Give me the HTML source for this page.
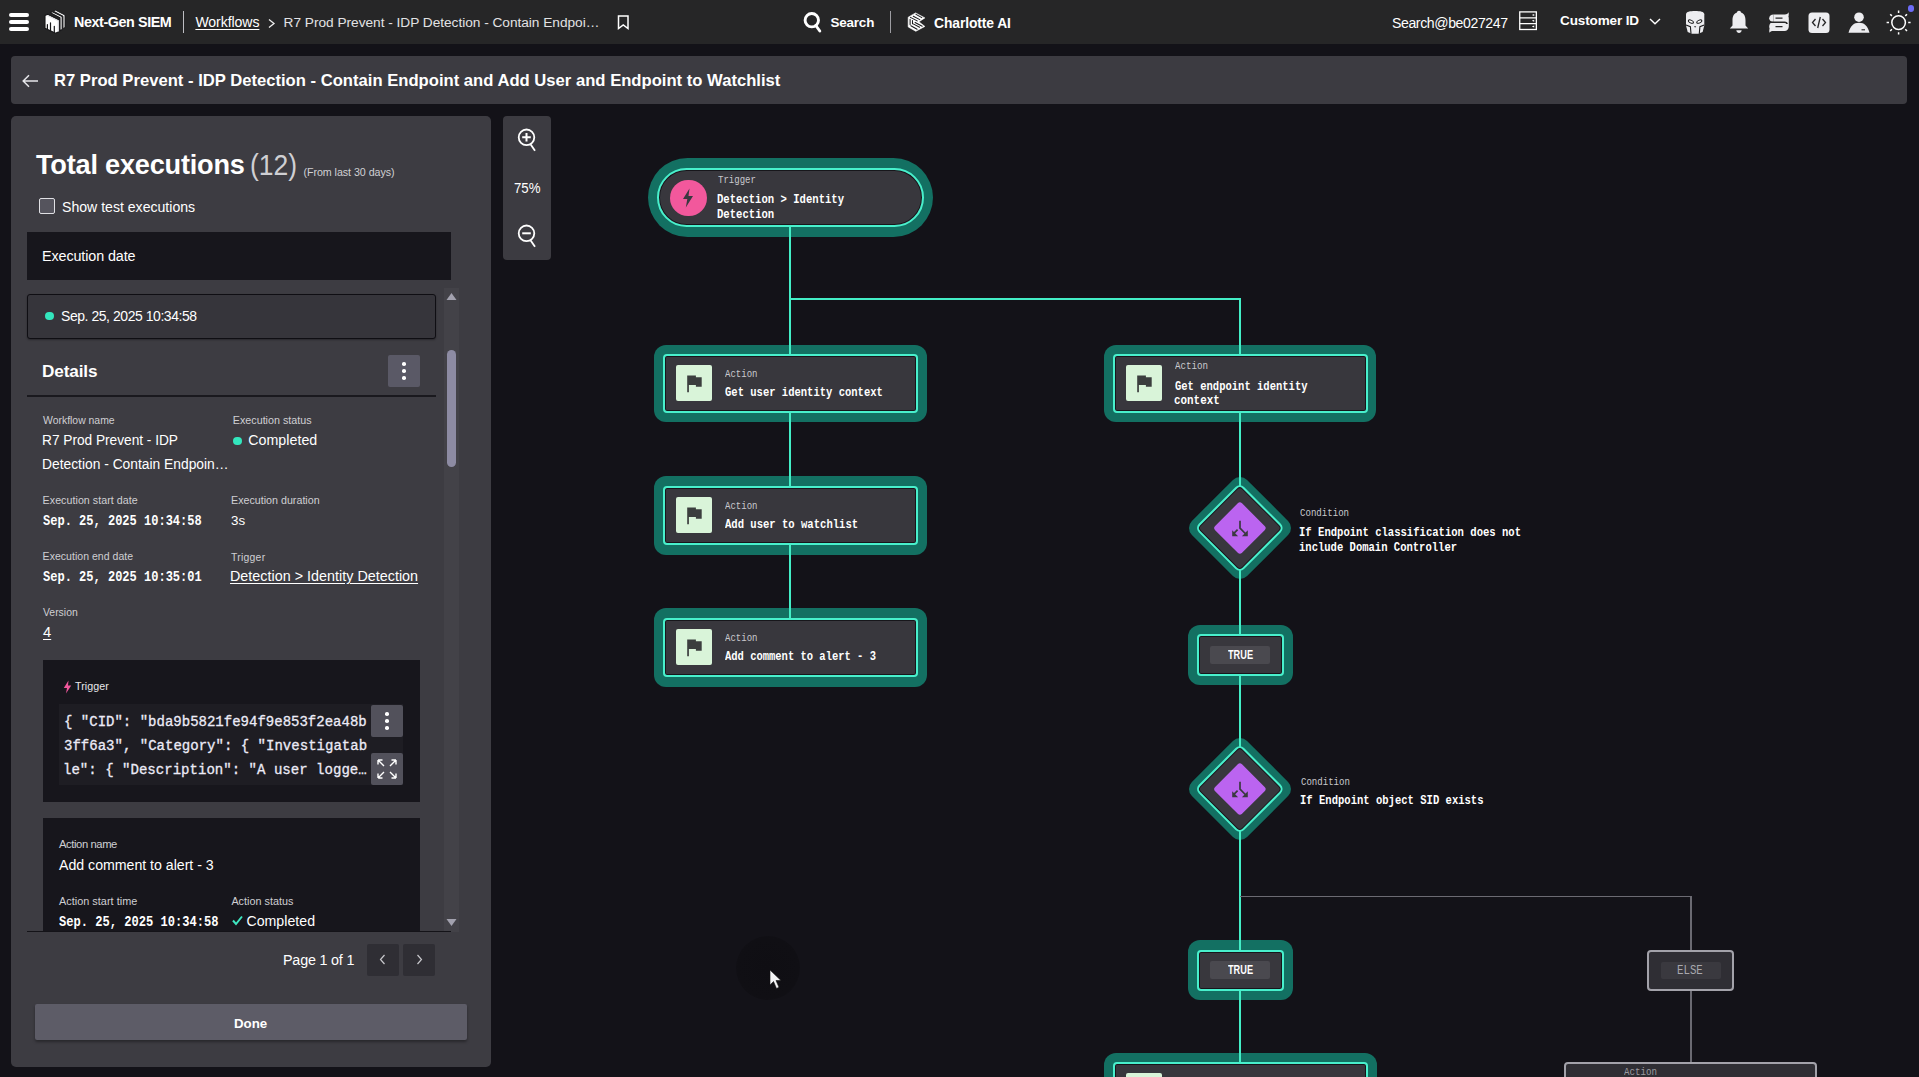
<!DOCTYPE html>
<html><head><meta charset="utf-8">
<style>
*{box-sizing:border-box;margin:0;padding:0}
html,body{width:1919px;height:1077px;overflow:hidden;background:#131218;font-family:"Liberation Sans",sans-serif;color:#fff}
.a{position:absolute}
.t{position:absolute;white-space:nowrap;line-height:1;z-index:5}
svg{position:absolute;overflow:visible}
.glow{position:absolute;background:#137062;z-index:1}
.inner{position:absolute;background:#38373d;border:2px solid #48f0cc;box-shadow:inset 0 0 0 1px #17161b;z-index:3}
.ln{position:absolute;background:#43eec6;z-index:2}
.gln{position:absolute;background:#6b6a72;z-index:2}
.ico{position:absolute;width:36px;height:36px;background:#d9f4d9;border-radius:2px;z-index:4}
.btn{position:absolute;width:32px;height:32px;background:#55535f;border-radius:2px;z-index:4}
</style></head><body>
<!-- NAV -->
<div class="a" style="left:0;top:0;width:1919px;height:44px;background:#262627"></div>
<div class="a" style="left:8.9px;top:12.8px;width:20.1px;height:4.2px;background:#fff;border-radius:2.1px"></div>
<div class="a" style="left:8.9px;top:19.8px;width:20.1px;height:4.2px;background:#fff;border-radius:2.1px"></div>
<div class="a" style="left:8.9px;top:26.8px;width:20.1px;height:4.2px;background:#fff;border-radius:2.1px"></div>
<!-- logo -->
<svg style="left:40px;top:6px" width="30" height="30" viewBox="0 0 30 30">
  <path d="M13.5 5.2 L15.6 4.2 L25 9 L25 21.5 L23 22.5 L23 10.2 Z" fill="#fff" stroke="#161618" stroke-width="0.9" stroke-linejoin="round"/>
  <path d="M10.3 6.8 L12.5 5.7 L22.2 10.6 L22.2 23.6 L20 24.7 L20 11.8 Z" fill="#fff" stroke="#161618" stroke-width="1.1" stroke-linejoin="round"/>
  <path d="M5 9.6 L7.6 8.3 L19.2 14 L19.2 25.6 L15.6 27.3 L5 22.2 Z" fill="#fff" stroke="#161618" stroke-width="1.1" stroke-linejoin="round"/>
  <path d="M7.3 9.5 L18.2 14.8 L18.2 25.5" fill="none" stroke="#e2e2e6" stroke-width="1.2"/>
  <path d="M7.4 18.6 V23 M10.5 16.8 V25 M14.3 20.3 V26.5" stroke="#161618" stroke-width="1.2" stroke-linecap="round"/>
</svg>
<div class="a" style="left:183px;top:11px;width:1.2px;height:22px;background:#bdbdc2"></div>
<svg style="left:268px;top:19px" width="8" height="9" viewBox="0 0 8 9"><path d="M1 0.5 L6 4.5 L1 8.5" stroke="#eee" stroke-width="1.3" fill="none"/></svg>
<svg style="left:617px;top:14.5px" width="13" height="15" viewBox="0 0 13 15"><path d="M1.5 1 H11 V13.5 L6.25 10 L1.5 13.5 Z" stroke="#fff" stroke-width="1.5" fill="none" stroke-linejoin="miter"/></svg>
<!-- search -->
<svg style="left:803px;top:12px" width="20" height="21" viewBox="0 0 20 21"><circle cx="8.8" cy="8.2" r="6.7" stroke="#fff" stroke-width="2.9" fill="none"/><path d="M12.8 13.5 L16.8 19" stroke="#fff" stroke-width="2.9" stroke-linecap="round"/></svg>
<div class="a" style="left:890px;top:11px;width:1.2px;height:22px;background:#9d9da2"></div>
<!-- charlotte -->
<svg style="left:903px;top:8px" width="26" height="28" viewBox="0 0 26 28">
  <path d="M5.2 9.2 L12.6 4.9 L21.9 9.9 L15.9 13.8 L21.9 18.4 L12.8 23.3 L5.2 18.9 Z" fill="#fff" stroke="#fff" stroke-width="0.6" stroke-linejoin="round"/>
  <path d="M7.4 9.4 L14.2 12.9 M10.3 8.2 L16.8 11.6 M13 6.4 L18.8 9.6 M7.9 17.7 L14.1 21.2 M9.7 15.6 L16.6 19.3 M12.1 14.5 L19.2 18.3 M7.1 11.3 V16.6 M9.5 12.6 V15.7" stroke="#1a1a1c" stroke-width="1.05" stroke-linecap="round"/>
</svg>
<!-- server icon -->
<svg style="left:1519px;top:11px" width="19" height="19" viewBox="0 0 19 19"><rect x="0.75" y="0.9" width="16.6" height="17.6" stroke="#fff" stroke-width="1.3" fill="none"/><path d="M0.7 6.8 H17.4 M0.7 12.6 H17.4" stroke="#fff" stroke-width="1.3"/><path d="M12.8 3.9 L15.2 2.9 V4.9 Z M12.8 9.7 L15.2 8.7 V10.7 Z M12.8 15.5 L15.2 14.5 V16.5 Z" fill="#fff"/></svg>
<svg style="left:1649px;top:17.5px" width="12" height="7" viewBox="0 0 12 7"><path d="M1 1 L6 5.8 L11 1" stroke="#fff" stroke-width="1.4" fill="none"/></svg>
<!-- falcon mask -->
<svg style="left:1682px;top:8px" width="26" height="28" viewBox="0 0 26 28">
  <path d="M4 6.2 C4 3.6 8 2.9 13.1 2.9 C18.2 2.9 22.3 3.6 22.3 6.2 L22.3 17.5 L20.6 24 L16.2 25.7 L10 25.7 L5.7 24 L4 17.5 Z" fill="#ededf0"/>
  <ellipse cx="8.9" cy="13.6" rx="2.7" ry="1.35" transform="rotate(24 8.9 13.6)" fill="#fff" stroke="#1a1a1c" stroke-width="1"/>
  <ellipse cx="17.3" cy="13.6" rx="2.7" ry="1.35" transform="rotate(-24 17.3 13.6)" fill="#fff" stroke="#1a1a1c" stroke-width="1"/>
  <path d="M12 18.2 H14.2 L13.1 19.7 Z" fill="#1a1a1c"/>
  <path d="M4 17.1 L8.4 18.7 L9 25.6 M22.3 17.1 L17.9 18.7 L17.3 25.6" stroke="#1a1a1c" stroke-width="1.1" fill="none"/>
</svg>
<!-- bell -->
<svg style="left:1729px;top:10px" width="20" height="24" viewBox="0 0 20 24">
  <path d="M10 0.8 C11.3 0.8 12 1.8 12 2.6 C15.5 3.8 16.5 7 16.5 10.5 L16.5 15.5 L19.2 18.6 L0.8 18.6 L3.5 15.5 L3.5 10.5 C3.5 7 4.5 3.8 8 2.6 C8 1.8 8.7 0.8 10 0.8 Z" fill="#ededf0"/>
  <path d="M7.3 20.3 C7.6 22.2 8.7 23 10 23 C11.3 23 12.4 22.2 12.7 20.3 Z" fill="#ededf0"/>
</svg>
<!-- chat S -->
<svg style="left:1769px;top:11.5px" width="20" height="21" viewBox="0 0 20 21">
  <path d="M4.5 2.5 H16 C17.5 2.5 18.8 1.8 19.6 0.3 C19.8 2 19.8 3 19.4 4.5 C19.8 5.2 19.8 6.2 19.8 6.5 L19.8 14.5 C19.8 17 18 19 15.5 19 H4 C2.5 19 1.2 19.7 0.4 20.7 C0.2 19 0.2 18 0.6 16.5 C0.3 16 0.2 15.2 0.2 14.5 C0.2 12 2 10 4.5 10 Z" fill="#ededf0"/>
  <path d="M4.5 2.5 C2 2.5 0.2 4 0.2 6.3 C0.2 8.5 2 10 4.5 10 Z" fill="#ededf0"/>
  <path d="M0 10.2 H15.5 C17.5 10.2 18 11 18 12" stroke="#262627" stroke-width="1.6" fill="none"/>
  <path d="M6.5 6.2 H13.5 M6.5 14.6 H13.5" stroke="#262627" stroke-width="1.3"/>
</svg>
<!-- code box -->
<svg style="left:1808px;top:11.5px" width="22" height="21" viewBox="0 0 22 21">
  <rect x="0.5" y="0.5" width="21" height="20.5" rx="3.5" fill="#ededf0"/>
  <path d="M7.5 7 L4.5 10.5 L7.5 14 M14.5 7 L17.5 10.5 L14.5 14 M12.3 5 L9.7 16" stroke="#262627" stroke-width="1.3" fill="none"/>
</svg>
<!-- person -->
<svg style="left:1848px;top:11.5px" width="22" height="21" viewBox="0 0 22 21">
  <circle cx="11" cy="5.2" r="4.8" fill="#ededf0"/>
  <path d="M11 10.8 C5.5 10.8 2.5 14 0.5 20.8 L21.5 20.8 C19.5 14 16.5 10.8 11 10.8 Z" fill="#ededf0"/>
  <path d="M13.5 17.8 H17" stroke="#262627" stroke-width="1.1"/>
</svg>
<!-- sun -->
<svg style="left:1886px;top:9.5px" width="26" height="26" viewBox="0 0 26 26">
  <circle cx="12.6" cy="12.6" r="6.8" stroke="#fff" stroke-width="1.5" fill="none"/>
  <path d="M12.6 0.6 V3 M12.6 22.2 V24.6 M0.6 12.6 H3 M22.2 12.6 H24.6 M4.2 4.2 L5.9 5.9 M19.3 19.3 L21 21 M4.2 21 L5.9 19.3 M19.3 5.9 L21 4.2" stroke="#fff" stroke-width="1.5"/>
</svg>
<div class="a" style="left:1907.5px;top:5px;width:6.5px;height:6.5px;border-radius:50%;background:#6d6cf7"></div>

<!-- TITLE BAR -->
<div class="a" style="left:11px;top:56px;width:1896px;height:48px;background:#3c3b41;border-radius:4px"></div>
<svg style="left:22px;top:73.5px" width="17" height="14" viewBox="0 0 17 14"><path d="M16 7 H1.5 M7 1.2 L1.2 7 L7 12.8" stroke="#e6e6ea" stroke-width="1.5" fill="none"/></svg>

<!-- LEFT PANEL -->
<div class="a" style="left:11px;top:116px;width:480px;height:951px;background:#3d3c42;border-radius:5px"></div>
<div class="a" style="left:39px;top:198px;width:16px;height:16px;background:#55545d;border:1.5px solid #e0e0e4;border-radius:2px"></div>
<div class="a" style="left:27px;top:232px;width:424px;height:48px;background:#17161c"></div>
<!-- scroll track -->
<div class="a" style="left:444px;top:288px;width:15px;height:644px;background:#434248"></div>
<svg style="left:446px;top:292px" width="11" height="9" viewBox="0 0 11 9"><path d="M5.5 1 L10.5 8 H0.5 Z" fill="#a2a1ae"/></svg>
<svg style="left:446px;top:918px" width="11" height="9" viewBox="0 0 11 9"><path d="M0.5 1 H10.5 L5.5 8 Z" fill="#a2a1ae"/></svg>
<div class="a" style="left:447px;top:350px;width:9px;height:117px;background:#8d8ba3;border-radius:4.5px"></div>
<!-- date row -->
<div class="a" style="left:27px;top:293.5px;width:409px;height:45px;background:#36353b;border:1px solid #0f0e13;border-radius:3px;box-shadow:0 1px 2px rgba(0,0,0,.35)"></div>
<div class="a" style="left:45.3px;top:311.7px;width:8.6px;height:8.6px;border-radius:50%;background:#33e6bd"></div>
<!-- details -->
<div class="btn" style="left:388px;top:355px;background:#5a5966"></div>
<div class="a" style="left:402.2px;top:362.3px;width:3.6px;height:3.6px;border-radius:50%;background:#fff;z-index:5"></div>
<div class="a" style="left:402.2px;top:369.3px;width:3.6px;height:3.6px;border-radius:50%;background:#fff;z-index:5"></div>
<div class="a" style="left:402.2px;top:376.3px;width:3.6px;height:3.6px;border-radius:50%;background:#fff;z-index:5"></div>
<div class="a" style="left:27px;top:394.5px;width:409px;height:2px;background:#1a191e"></div>
<div class="a" style="left:233px;top:436.7px;width:8.8px;height:8.8px;border-radius:50%;background:#33e6bd"></div>
<!-- trigger block -->
<div class="a" style="left:43px;top:660px;width:377px;height:141.5px;background:#17161c"></div>
<svg style="left:62.5px;top:679.5px" width="9" height="14" viewBox="0 0 9 14"><path d="M5.5 0.5 L0.8 8 H4 L3 13.5 L8.2 5.5 H5 Z" fill="#f0579b"/></svg>
<div class="a" style="left:59px;top:703.7px;width:344px;height:81.3px;background:#1e1d23"></div>
<div class="btn" style="left:371px;top:705px;background:#52515b"></div>
<div class="a" style="left:385.2px;top:712.3px;width:3.6px;height:3.6px;border-radius:50%;background:#fff;z-index:5"></div>
<div class="a" style="left:385.2px;top:719.3px;width:3.6px;height:3.6px;border-radius:50%;background:#fff;z-index:5"></div>
<div class="a" style="left:385.2px;top:726.3px;width:3.6px;height:3.6px;border-radius:50%;background:#fff;z-index:5"></div>
<div class="btn" style="left:371px;top:753px;background:#52515b"></div>
<svg style="left:376px;top:758px;z-index:5" width="22" height="22" viewBox="0 0 22 22"><path d="M2 2 L8 8 M2 2 H6.5 M2 2 V6.5 M20 2 L14 8 M20 2 H15.5 M20 2 V6.5 M2 20 L8 14 M2 20 H6.5 M2 20 V15.5 M20 20 L14 14 M20 20 H15.5 M20 20 V15.5" stroke="#fff" stroke-width="1.4" fill="none"/></svg>
<!-- action block -->
<div class="a" style="left:43px;top:818px;width:377px;height:113px;background:#17161c"></div>
<svg style="left:231.5px;top:915px;z-index:5" width="11" height="11" viewBox="0 0 11 11"><path d="M1 5.5 L4 9 L10 1.5" stroke="#3ee6c0" stroke-width="2" fill="none"/></svg>
<div class="a" style="left:27px;top:930.5px;width:424px;height:1.5px;background:#141318;z-index:6"></div>
<!-- pagination -->
<div class="a" style="left:367px;top:944px;width:32px;height:31.5px;background:#2f2e34;border-radius:2px"></div>
<div class="a" style="left:403px;top:944px;width:32px;height:31.5px;background:#2f2e34;border-radius:2px"></div>
<svg style="left:379px;top:954px" width="7" height="11" viewBox="0 0 7 11"><path d="M5.5 1 L1.5 5.5 L5.5 10" stroke="#c8c8cc" stroke-width="1.2" fill="none"/></svg>
<svg style="left:416px;top:954px" width="7" height="11" viewBox="0 0 7 11"><path d="M1.5 1 L5.5 5.5 L1.5 10" stroke="#c8c8cc" stroke-width="1.2" fill="none"/></svg>
<div class="a" style="left:35px;top:1004px;width:432px;height:36px;background:#5d5c67;border-radius:2px;box-shadow:0 2px 3px rgba(0,0,0,.35)"></div>

<!-- ZOOM -->
<div class="a" style="left:503px;top:116px;width:48px;height:144px;background:#3c3b41;border-radius:4px"></div>
<svg style="left:517px;top:128px" width="20" height="24" viewBox="0 0 20 24"><circle cx="9.5" cy="9.3" r="7.8" stroke="#fff" stroke-width="1.8" fill="none"/><path d="M9.5 5 V13.6 M5.2 9.3 H13.8" stroke="#fff" stroke-width="2"/><path d="M13.5 16.2 L18 22.8" stroke="#fff" stroke-width="1.8"/></svg>
<svg style="left:517px;top:224px" width="20" height="24" viewBox="0 0 20 24"><circle cx="9.5" cy="9.3" r="7.8" stroke="#fff" stroke-width="1.8" fill="none"/><path d="M5.2 9.3 H13.8" stroke="#fff" stroke-width="2"/><path d="M13.5 16.2 L18 22.8" stroke="#fff" stroke-width="1.8"/></svg>

<!-- CANVAS -->
<!-- lines -->
<div class="ln" style="left:789px;top:220px;width:2px;height:400px"></div>
<div class="ln" style="left:789px;top:298px;width:452px;height:2px"></div>
<div class="ln" style="left:1239px;top:298px;width:2px;height:779px"></div>
<div class="gln" style="left:1240px;top:895.5px;width:451.5px;height:1.5px"></div>
<div class="gln" style="left:1690px;top:895.5px;width:1.5px;height:181px"></div>

<!-- trigger pill -->
<div class="glow" style="left:648px;top:158px;width:285px;height:79px;border-radius:40px"></div>
<div class="inner" style="left:656.5px;top:167.5px;width:267.5px;height:59.5px;border-radius:30px"></div>
<div class="a" style="left:670px;top:179.5px;width:36.5px;height:36.5px;border-radius:50%;background:#f2589c;z-index:4"></div>
<svg style="left:681px;top:187.5px;z-index:5" width="14" height="20" viewBox="0 0 14 20"><path d="M8.5 0.5 L2 11 H6.3 L4.8 19.5 L12 8 H7.5 Z" fill="#3a3940"/></svg>

<!-- action nodes left -->
<div class="glow" style="left:654px;top:344.5px;width:272.5px;height:77.5px;border-radius:12px"></div>
<div class="inner" style="left:663px;top:353.7px;width:254.5px;height:59px;border-radius:4px"></div>
<div class="ico" style="left:676px;top:365.3px"></div>
<div class="glow" style="left:654px;top:476px;width:272.5px;height:78.5px;border-radius:12px"></div>
<div class="inner" style="left:663px;top:486px;width:254.5px;height:59px;border-radius:4px"></div>
<div class="ico" style="left:676px;top:497px"></div>
<div class="glow" style="left:654px;top:608.2px;width:272.5px;height:78.5px;border-radius:12px"></div>
<div class="inner" style="left:663px;top:618.2px;width:254.5px;height:59px;border-radius:4px"></div>
<div class="ico" style="left:676px;top:629px"></div>
<!-- right action node -->
<div class="glow" style="left:1104.3px;top:344.8px;width:272.2px;height:77.2px;border-radius:12px"></div>
<div class="inner" style="left:1113.3px;top:354px;width:254.3px;height:58.5px;border-radius:4px"></div>
<div class="ico" style="left:1126px;top:365.3px"></div>
<!-- flags -->
<svg style="left:676px;top:365.3px;z-index:5" width="36" height="36" viewBox="0 0 36 36"><path d="M11.2 10.6 H19.9 V12.2 H25.7 V21.8 H19.9 V19.9 H12.9 V27.3 H11.2 Z" fill="#3b3e3e"/></svg>
<svg style="left:676px;top:497px;z-index:5" width="36" height="36" viewBox="0 0 36 36"><path d="M11.2 10.6 H19.9 V12.2 H25.7 V21.8 H19.9 V19.9 H12.9 V27.3 H11.2 Z" fill="#3b3e3e"/></svg>
<svg style="left:676px;top:629px;z-index:5" width="36" height="36" viewBox="0 0 36 36"><path d="M11.2 10.6 H19.9 V12.2 H25.7 V21.8 H19.9 V19.9 H12.9 V27.3 H11.2 Z" fill="#3b3e3e"/></svg>
<svg style="left:1126px;top:365.3px;z-index:5" width="36" height="36" viewBox="0 0 36 36"><path d="M11.2 10.6 H19.9 V12.2 H25.7 V21.8 H19.9 V19.9 H12.9 V27.3 H11.2 Z" fill="#3b3e3e"/></svg>

<!-- diamonds -->
<div class="glow" style="left:1201px;top:488.5px;width:78px;height:78px;border-radius:10px;transform:rotate(45deg)"></div>
<div class="inner" style="left:1208.2px;top:495.7px;width:63.6px;height:63.6px;border-radius:6px;transform:rotate(45deg)"></div>
<div class="a" style="left:1221.1px;top:508.6px;width:37.8px;height:37.8px;border-radius:3px;transform:rotate(45deg);background:#bb64f0;z-index:4"></div>
<svg style="left:1228px;top:515.5px;z-index:5" width="24" height="24" viewBox="0 0 24 24"><path d="M12 4.8 V12.2 L17.8 18 M9.6 13.6 L5.6 17.6" stroke="#3a3940" stroke-width="1.7" fill="none"/><path d="M19.8 20.2 V14.3 L13.9 20.2 Z M4.2 20.2 V14.3 L10.1 20.2 Z" fill="#3a3940"/></svg>

<div class="glow" style="left:1201px;top:749.5px;width:78px;height:78px;border-radius:10px;transform:rotate(45deg)"></div>
<div class="inner" style="left:1208.2px;top:756.7px;width:63.6px;height:63.6px;border-radius:6px;transform:rotate(45deg)"></div>
<div class="a" style="left:1221.1px;top:769.6px;width:37.8px;height:37.8px;border-radius:3px;transform:rotate(45deg);background:#bb64f0;z-index:4"></div>
<svg style="left:1228px;top:776.5px;z-index:5" width="24" height="24" viewBox="0 0 24 24"><path d="M12 4.8 V12.2 L17.8 18 M9.6 13.6 L5.6 17.6" stroke="#3a3940" stroke-width="1.7" fill="none"/><path d="M19.8 20.2 V14.3 L13.9 20.2 Z M4.2 20.2 V14.3 L10.1 20.2 Z" fill="#3a3940"/></svg>

<!-- TRUE boxes -->
<div class="glow" style="left:1188px;top:625px;width:105px;height:60px;border-radius:12px"></div>
<div class="inner" style="left:1196.7px;top:634px;width:87.5px;height:42.2px;border-radius:4px"></div>
<div class="a" style="left:1210px;top:646px;width:60.3px;height:18px;background:#4a494f;border-radius:2px;z-index:4"></div>
<div class="glow" style="left:1188px;top:940px;width:105px;height:60px;border-radius:12px"></div>
<div class="inner" style="left:1196.7px;top:949.5px;width:87.5px;height:41px;border-radius:4px"></div>
<div class="a" style="left:1210px;top:961px;width:60.3px;height:18px;background:#4a494f;border-radius:2px;z-index:4"></div>
<!-- ELSE -->
<div class="a" style="left:1647px;top:949.5px;width:87px;height:41px;border:2px solid #a3a2aa;border-radius:4px;background:#2f2e34;z-index:3"></div>
<div class="a" style="left:1660.7px;top:961.5px;width:60px;height:17px;background:#3a393f;border-radius:2px;z-index:4"></div>
<!-- bottom nodes -->
<div class="glow" style="left:1104px;top:1052.8px;width:272.5px;height:40px;border-radius:12px"></div>
<div class="inner" style="left:1113px;top:1062px;width:254.6px;height:40px;border-radius:4px"></div>
<div class="ico" style="left:1126px;top:1072.5px"></div>
<div class="a" style="left:1563.5px;top:1062px;width:253.2px;height:40px;border:2px solid #a3a2aa;border-radius:4px;background:#2f2e34;z-index:3"></div>

<!-- cursor -->
<div class="a" style="left:735.5px;top:936px;width:64px;height:64px;border-radius:50%;background:radial-gradient(circle,#0f0e13 0,#100f14 65%,#121117 100%);z-index:1"></div>
<svg style="left:769px;top:969px;z-index:6" width="14" height="22" viewBox="0 0 14 22"><path d="M1 1 L1 16 L4.5 12.5 L7.5 19.5 L10 18.3 L7 11.5 L12 11.5 Z" fill="#f4f4f6" stroke="#111" stroke-width="0.6"/></svg>

<div class="t" style="left:74.00px;top:15.30px;font-size:14.35px;color:#fff;font-weight:bold;letter-spacing:-0.417px;">Next-Gen SIEM</div>
<div class="t" style="left:195.40px;top:15.40px;font-size:14.09px;color:#fff;letter-spacing:-0.075px;text-decoration:underline;text-underline-offset:2px;">Workflows</div>
<div class="t" style="left:283.60px;top:15.86px;font-size:13.69px;color:#e2e2e4;letter-spacing:-0.025px;">R7 Prod Prevent - IDP Detection - Contain Endpoi…</div>
<div class="t" style="left:830.40px;top:15.71px;font-size:13.43px;color:#fff;font-weight:bold;letter-spacing:-0.160px;">Search</div>
<div class="t" style="left:934.00px;top:16.83px;font-size:13.88px;color:#fff;font-weight:bold;letter-spacing:-0.109px;">Charlotte AI</div>
<div class="t" style="left:1392.00px;top:15.83px;font-size:14.09px;color:#fff;letter-spacing:-0.393px;">Search@be027247</div>
<div class="t" style="left:1560.00px;top:13.92px;font-size:13.51px;color:#fff;font-weight:bold;letter-spacing:-0.120px;">Customer ID</div>
<div class="t" style="left:54.00px;top:73.35px;font-size:16.64px;color:#fff;font-weight:bold;letter-spacing:0.001px;">R7 Prod Prevent - IDP Detection - Contain Endpoint and Add User and Endpoint to Watchlist</div>
<div class="t" style="left:36.00px;top:151.44px;font-size:27.13px;color:#fff;font-weight:bold;letter-spacing:-0.213px;">Total executions</div>
<div class="t" style="left:250.00px;top:150.42px;font-size:30.10px;color:#cfcfd3;transform:scaleX(0.8800);transform-origin:0 0;">(12)</div>
<div class="t" style="left:303.40px;top:166.61px;font-size:10.70px;color:#d0d0d4;letter-spacing:-0.044px;">(From last 30 days)</div>
<div class="t" style="left:62.00px;top:199.64px;font-size:14.11px;color:#fff;letter-spacing:-0.011px;">Show test executions</div>
<div class="t" style="left:42.00px;top:249.30px;font-size:14.35px;color:#fff;letter-spacing:-0.108px;">Execution date</div>
<div class="t" style="left:61.00px;top:309.89px;font-size:13.96px;color:#fff;letter-spacing:-0.429px;">Sep. 25, 2025 10:34:58</div>
<div class="t" style="left:42.00px;top:363.16px;font-size:17.17px;color:#fff;font-weight:bold;letter-spacing:-0.117px;">Details</div>
<div class="t" style="left:43.00px;top:416.43px;font-size:10.43px;color:#cfcfd3;">Workflow name</div>
<div class="t" style="left:42.00px;top:434.09px;font-size:13.72px;color:#fff;letter-spacing:-0.025px;">R7 Prod Prevent - IDP</div>
<div class="t" style="left:42.00px;top:458.26px;font-size:13.82px;color:#fff;">Detection - Contain Endpoin…</div>
<div class="t" style="left:232.80px;top:415.06px;font-size:10.75px;color:#cfcfd3;letter-spacing:-0.007px;">Execution status</div>
<div class="t" style="left:248.20px;top:433.21px;font-size:14.22px;color:#fff;letter-spacing:0.037px;">Completed</div>
<div class="t" style="left:42.60px;top:494.82px;font-size:10.68px;color:#cfcfd3;letter-spacing:0.042px;">Execution start date</div>
<div class="t" style="left:43.00px;top:514.48px;font-size:15.15px;color:#fff;font-weight:bold;font-family:'Liberation Mono',monospace;transform:scaleX(0.7940);transform-origin:0 0;">Sep. 25, 2025 10:34:58</div>
<div class="t" style="left:231.00px;top:494.82px;font-size:10.69px;color:#cfcfd3;letter-spacing:0.006px;">Execution duration</div>
<div class="t" style="left:231.00px;top:514.39px;font-size:13.37px;color:#fff;letter-spacing:0.100px;">3s</div>
<div class="t" style="left:42.60px;top:550.96px;font-size:10.51px;color:#cfcfd3;letter-spacing:0.035px;">Execution end date</div>
<div class="t" style="left:43.00px;top:570.48px;font-size:15.15px;color:#fff;font-weight:bold;font-family:'Liberation Mono',monospace;transform:scaleX(0.7940);transform-origin:0 0;">Sep. 25, 2025 10:35:01</div>
<div class="t" style="left:231.00px;top:552.61px;font-size:10.40px;color:#cfcfd3;letter-spacing:0.267px;">Trigger</div>
<div class="t" style="left:230.00px;top:569.07px;font-size:14.33px;color:#fff;letter-spacing:0.017px;text-decoration:underline;text-underline-offset:2px;">Detection &gt; Identity Detection</div>
<div class="t" style="left:43.00px;top:608.04px;font-size:10.42px;color:#cfcfd3;">Version</div>
<div class="t" style="left:43.00px;top:625.33px;font-size:14.78px;color:#fff;text-decoration:underline;text-underline-offset:2px;">4</div>
<div class="t" style="left:75.00px;top:681.41px;font-size:10.70px;color:#e6e6ea;letter-spacing:0.050px;">Trigger</div>
<div class="t" style="left:63.60px;top:715.48px;font-size:15.15px;color:#ecebf7;font-family:'Liberation Mono',monospace;transform:scaleX(0.9255);transform-origin:0 0;-webkit-text-stroke:0.3px #ecebf7;">{ "CID": "bda9b5821fe94f9e853f2ea48b</div>
<div class="t" style="left:63.60px;top:739.08px;font-size:14.70px;color:#ecebf7;font-family:'Liberation Mono',monospace;transform:scaleX(0.9551);transform-origin:0 0;-webkit-text-stroke:0.3px #ecebf7;">3ff6a3", "Category": { "Investigatab</div>
<div class="t" style="left:62.60px;top:763.48px;font-size:15.15px;color:#ecebf7;font-family:'Liberation Mono',monospace;transform:scaleX(0.9286);transform-origin:0 0;-webkit-text-stroke:0.3px #ecebf7;">le": { "Description": "A user logge…</div>
<div class="t" style="left:59.00px;top:839.17px;font-size:11.22px;color:#cfcfd3;letter-spacing:-0.400px;">Action name</div>
<div class="t" style="left:59.00px;top:857.50px;font-size:14.18px;color:#fff;letter-spacing:-0.022px;">Add comment to alert - 3</div>
<div class="t" style="left:59.00px;top:895.76px;font-size:10.87px;color:#cfcfd3;letter-spacing:0.025px;">Action start time</div>
<div class="t" style="left:231.40px;top:895.83px;font-size:10.79px;color:#cfcfd3;letter-spacing:0.017px;">Action status</div>
<div class="t" style="left:59.00px;top:915.48px;font-size:15.15px;color:#fff;font-weight:bold;font-family:'Liberation Mono',monospace;transform:scaleX(0.7980);transform-origin:0 0;">Sep. 25, 2025 10:34:58</div>
<div class="t" style="left:246.40px;top:913.97px;font-size:14.16px;color:#fff;letter-spacing:0.025px;">Completed</div>
<div class="t" style="left:283.00px;top:953.30px;font-size:14.35px;color:#fff;letter-spacing:-0.200px;">Page 1 of 1</div>
<div class="t" style="left:234.00px;top:1016.89px;font-size:13.30px;color:#fff;font-weight:bold;">Done</div>
<div class="t" style="left:514.00px;top:179.64px;font-size:15.36px;color:#fff;transform:scaleX(0.8621);transform-origin:0 0;">75%</div>
<div class="t" style="left:718.00px;top:175.73px;font-size:10.15px;color:#c9c9cd;font-family:'Liberation Mono',monospace;transform:scaleX(0.8907);transform-origin:0 0;">Trigger</div>
<div class="t" style="left:717.00px;top:194.23px;font-size:12.73px;color:#fff;font-weight:bold;font-family:'Liberation Mono',monospace;transform:scaleX(0.8323);transform-origin:0 0;">Detection &gt; Identity</div>
<div class="t" style="left:717.00px;top:209.43px;font-size:12.73px;color:#fff;font-weight:bold;font-family:'Liberation Mono',monospace;transform:scaleX(0.8327);transform-origin:0 0;">Detection</div>
<div class="t" style="left:724.60px;top:369.27px;font-size:10.76px;color:#c9c9cd;font-family:'Liberation Mono',monospace;transform:scaleX(0.8387);transform-origin:0 0;">Action</div>
<div class="t" style="left:724.60px;top:386.30px;font-size:13.03px;color:#fff;font-weight:bold;font-family:'Liberation Mono',monospace;transform:scaleX(0.8083);transform-origin:0 0;">Get user identity context</div>
<div class="t" style="left:724.60px;top:501.27px;font-size:10.76px;color:#c9c9cd;font-family:'Liberation Mono',monospace;transform:scaleX(0.8387);transform-origin:0 0;">Action</div>
<div class="t" style="left:724.60px;top:518.30px;font-size:13.03px;color:#fff;font-weight:bold;font-family:'Liberation Mono',monospace;transform:scaleX(0.8112);transform-origin:0 0;">Add user to watchlist</div>
<div class="t" style="left:724.60px;top:633.27px;font-size:10.76px;color:#c9c9cd;font-family:'Liberation Mono',monospace;transform:scaleX(0.8387);transform-origin:0 0;">Action</div>
<div class="t" style="left:724.60px;top:650.30px;font-size:13.03px;color:#fff;font-weight:bold;font-family:'Liberation Mono',monospace;transform:scaleX(0.8054);transform-origin:0 0;">Add comment to alert - 3</div>
<div class="t" style="left:1174.60px;top:360.94px;font-size:10.61px;color:#c9c9cd;font-family:'Liberation Mono',monospace;transform:scaleX(0.8649);transform-origin:0 0;">Action</div>
<div class="t" style="left:1174.60px;top:380.96px;font-size:12.88px;color:#fff;font-weight:bold;font-family:'Liberation Mono',monospace;transform:scaleX(0.8167);transform-origin:0 0;">Get endpoint identity</div>
<div class="t" style="left:1173.60px;top:394.96px;font-size:12.88px;color:#fff;font-weight:bold;font-family:'Liberation Mono',monospace;transform:scaleX(0.8462);transform-origin:0 0;">context</div>
<div class="t" style="left:1300.00px;top:508.14px;font-size:10.61px;color:#c9c9cd;font-family:'Liberation Mono',monospace;transform:scaleX(0.8555);transform-origin:0 0;">Condition</div>
<div class="t" style="left:1299.00px;top:526.10px;font-size:13.03px;color:#fff;font-weight:bold;font-family:'Liberation Mono',monospace;transform:scaleX(0.8122);transform-origin:0 0;">If Endpoint classification does not</div>
<div class="t" style="left:1299.00px;top:541.10px;font-size:13.03px;color:#fff;font-weight:bold;font-family:'Liberation Mono',monospace;transform:scaleX(0.8093);transform-origin:0 0;">include Domain Controller</div>
<div class="t" style="left:1228.20px;top:648.53px;font-size:12.61px;color:#fff;font-weight:bold;transform:scaleX(0.7298);transform-origin:0 0;">TRUE</div>
<div class="t" style="left:1300.60px;top:776.94px;font-size:10.61px;color:#c9c9cd;font-family:'Liberation Mono',monospace;transform:scaleX(0.8537);transform-origin:0 0;">Condition</div>
<div class="t" style="left:1299.60px;top:793.90px;font-size:13.03px;color:#fff;font-weight:bold;font-family:'Liberation Mono',monospace;transform:scaleX(0.8102);transform-origin:0 0;">If Endpoint object SID exists</div>
<div class="t" style="left:1228.20px;top:963.53px;font-size:12.61px;color:#fff;font-weight:bold;transform:scaleX(0.7298);transform-origin:0 0;">TRUE</div>
<div class="t" style="left:1676.80px;top:963.83px;font-size:13.18px;color:#a8a8ae;font-family:'Liberation Mono',monospace;transform:scaleX(0.8170);transform-origin:0 0;">ELSE</div>
<div class="t" style="left:1624.00px;top:1066.94px;font-size:10.61px;color:#9a9aa0;font-family:'Liberation Mono',monospace;transform:scaleX(0.8649);transform-origin:0 0;">Action</div>
</body></html>
